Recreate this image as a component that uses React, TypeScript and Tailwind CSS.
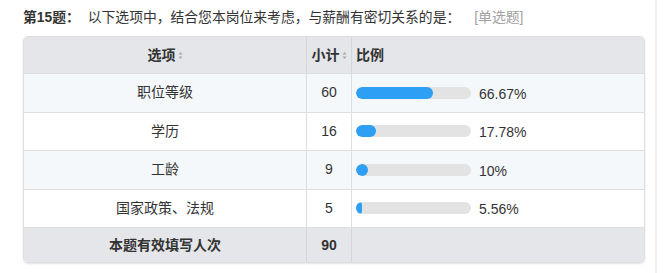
const rows = [
  { name: '职位等级', count: 60, pct: 66.67, label: '66.67%' },
  { name: '学历', count: 16, pct: 17.78, label: '17.78%' },
  { name: '工龄', count: 9, pct: 10, label: '10%' },
  { name: '国家政策、法规', count: 5, pct: 5.56, label: '5.56%' },
];

function SortIcon() {
  return (
    <svg width="5" height="9" viewBox="0 0 5 9" className="ml-[2px] inline-block">
      <path d="M2.5 1 L4.5 3.6 L0.5 3.6 Z" fill="#a8a8a8" />
      <path d="M2.5 8 L4.5 5.4 L0.5 5.4 Z" fill="#a8a8a8" />
    </svg>
  );
}

export default function App() {
  return (
    <div
      className="flex h-[273px] w-[670px] bg-white text-[#333]"
      style={{ fontFamily: '"Liberation Sans", "Noto Sans CJK SC", sans-serif' }}
    >
      <div className="w-[655px] pl-[23px] pr-[10px] pt-[7px]">
        <div className="flex h-[22px] items-center text-[13.8px]">
          <span className="font-bold">第15题：</span>
          <span className="ml-[8px]">以下选项中，结合您本岗位来考虑，与薪酬有密切关系的是：</span>
          <span className="ml-[14px] text-[#a0a0a0]">[单选题]</span>
        </div>

        <div className="mt-[7px] overflow-hidden rounded-[5px] border border-[#dedede] shadow-[0_1px_2px_rgba(0,0,0,0.12)] text-[14px]">
          <div className="grid h-[36px] grid-cols-[283px_45px_1fr] bg-[#e4e6ea] font-bold">
            <div className="flex items-center justify-center border-r border-[#d6d6d6]">
              选项
              <SortIcon />
            </div>
            <div className="flex items-center justify-center border-r border-[#d6d6d6]">
              小计
              <SortIcon />
            </div>
            <div className="flex items-center pl-[4px]">比例</div>
          </div>

          {rows.map((r, i) => (
            <div
              key={r.name}
              className={
                'grid h-[38.5px] grid-cols-[283px_45px_1fr] border-t border-[#dedede] ' +
                (i % 2 === 0 ? 'bg-[#f5f8fb]' : 'bg-white')
              }
            >
              <div className="flex items-center justify-center border-r border-[#dedede]">{r.name}</div>
              <div className="flex items-center justify-center border-r border-[#dedede]">{r.count}</div>
              <div className="flex items-center pl-[4px]">
                <div className="h-[12px] w-[115px] overflow-hidden rounded-full bg-[#e3e3e3]">
                  <div
                    className="h-full min-w-[6px] rounded-full bg-[#2d9ff4]"
                    style={{ width: `${r.pct}%` }}
                  />
                </div>
                <span className="ml-[8px] mt-[3px]">{r.label}</span>
              </div>
            </div>
          ))}

          <div className="grid h-[35px] grid-cols-[283px_45px_1fr] border-t border-[#dedede] bg-[#e4e6ea]">
            <div className="flex items-center justify-center border-r border-[#d6d6d6] font-bold">本题有效填写人次</div>
            <div className="flex items-center justify-center border-r border-[#d6d6d6] font-bold">90</div>
            <div />
          </div>
        </div>
      </div>
      <div className="h-full w-[2px] bg-[#efefef]" />
    </div>
  );
}
